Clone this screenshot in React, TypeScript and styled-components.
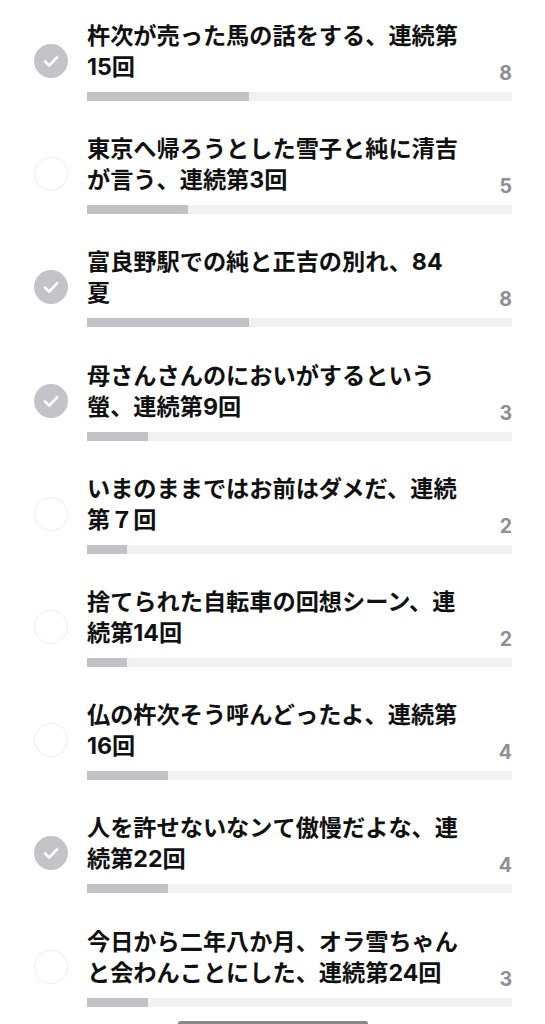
import styled, { createGlobalStyle } from 'styled-components';

const GlobalStyle = createGlobalStyle`
  html, body {
    margin: 0;
    padding: 0;
    background: #ffffff;
  }
  body {
    font-family: "Inter", "Noto Sans CJK JP", sans-serif;
    -webkit-font-smoothing: antialiased;
  }
`;

type Episode = {
  title: string;
  count: number;
  done: boolean;
};

const MAX_COUNT = 21;

const episodes: Episode[] = [
  { title: '杵次が売った馬の話をする、連続第15回', count: 8, done: true },
  { title: '東京へ帰ろうとした雪子と純に清吉が言う、連続第3回', count: 5, done: false },
  { title: '富良野駅での純と正吉の別れ、84夏', count: 8, done: true },
  { title: '母さんさんのにおいがするという螢、連続第9回', count: 3, done: true },
  { title: 'いまのままではお前はダメだ、連続第７回', count: 2, done: false },
  { title: '捨てられた自転車の回想シーン、連続第14回', count: 2, done: false },
  { title: '仏の杵次そう呼んどったよ、連続第16回', count: 4, done: false },
  { title: '人を許せないなンて傲慢だよな、連続第22回', count: 4, done: true },
  { title: '今日から二年八か月、オラ雪ちゃんと会わんことにした、連続第24回', count: 3, done: false },
];

function CheckCircle({ done }: { done: boolean }) {
  return (
    <Circle $done={done}>
      {done && (
        <svg width="34" height="34" viewBox="0 0 34 34">
          <path
            d="M11 17.5 L15.2 21.7 L23.2 13.2"
            fill="none"
            stroke="#ffffff"
            strokeWidth="2.6"
            strokeLinecap="round"
            strokeLinejoin="round"
          />
        </svg>
      )}
    </Circle>
  );
}

function App() {
  return (
    <Screen>
      <GlobalStyle />
      <List>
        {episodes.map((ep) => (
          <Item key={ep.title}>
            <CheckCircle done={ep.done} />
            <Content>
              <TopRow>
                <Title>{ep.title}</Title>
                <Count>{ep.count}</Count>
              </TopRow>
              <Track>
                <Fill style={{ width: `${(ep.count / MAX_COUNT) * 100}%` }} />
              </Track>
            </Content>
          </Item>
        ))}
      </List>
      <HomeIndicator />
    </Screen>
  );
}

export default App;

const Screen = styled.div`
  position: relative;
  width: 545px;
  height: 1024px;
  overflow: hidden;
  background: #ffffff;
`;
const List = styled.div`
  display: flex;
  flex-direction: column;
  padding: 21px 33px 0 34px;
`;
const Item = styled.div`
  display: flex;
  align-items: center;
  gap: 19px;
  padding-bottom: 33.2px;
`;
const Circle = styled.div<{ $done: boolean }>`
  flex: none;
  width: 34px;
  height: 34px;
  border-radius: 50%;
  box-sizing: border-box;
  display: flex;
  align-items: center;
  justify-content: center;
  background: ${(p) => (p.$done ? '#c3c3c8' : '#ffffff')};
  border: ${(p) => (p.$done ? 'none' : '1.5px solid #ededed')};
`;
const Content = styled.div`
  flex: 1;
  display: flex;
  flex-direction: column;
  gap: 9px;
`;
const TopRow = styled.div`
  display: flex;
  align-items: flex-end;
`;
const Title = styled.div`
  width: 375px;
  font-size: 23.2px;
  line-height: 31px;
  font-weight: 700;
  color: #111111;
  line-break: strict;
`;
const Count = styled.div`
  flex: 1;
  text-align: right;
  font-size: 19.5px;
  line-height: 20px;
  font-weight: 700;
  color: #8e8e93;
  margin-bottom: 0;
`;
const Track = styled.div`
  height: 9px;
  background: #f1f1f1;
`;
const Fill = styled.div`
  height: 100%;
  background: #c1c1c6;
`;
const HomeIndicator = styled.div`
  position: absolute;
  left: 178px;
  top: 1021px;
  width: 190px;
  height: 5px;
  border-radius: 3px;
  background: #8a8a8a;
`;
